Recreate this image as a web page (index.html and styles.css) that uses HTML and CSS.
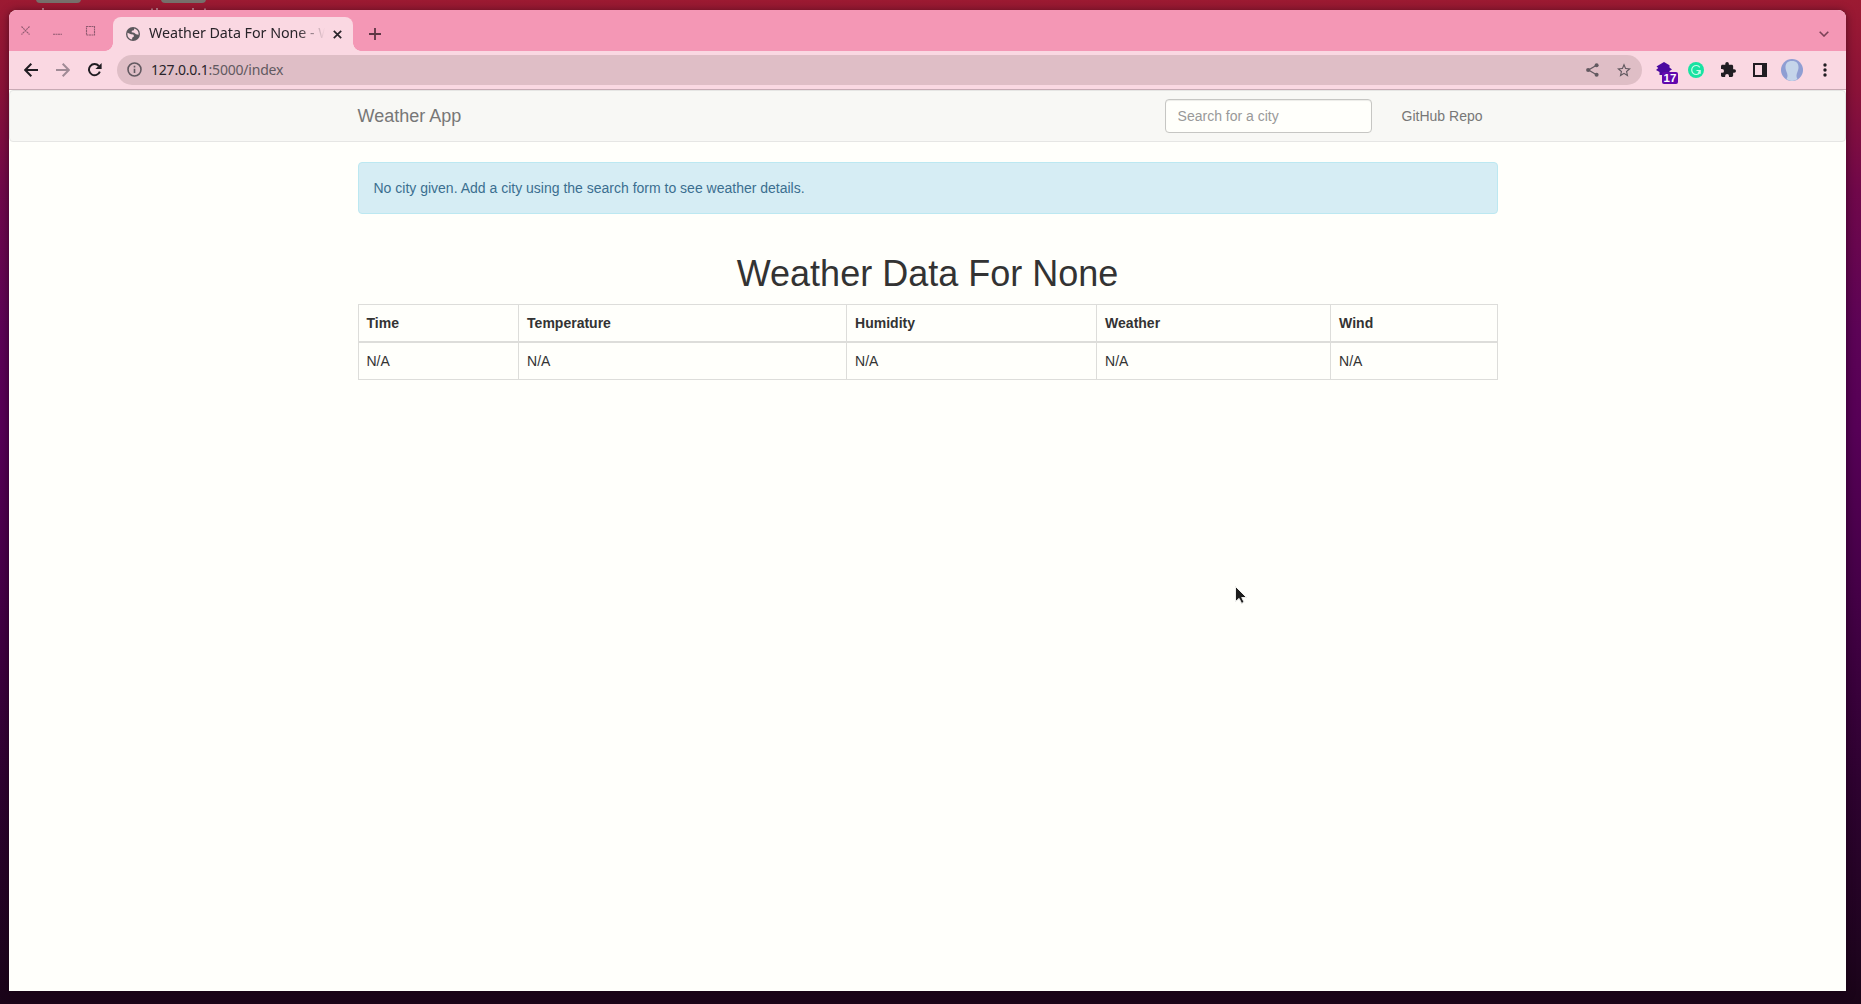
FILE: index.html
```
<!DOCTYPE html>
<html lang="en">
<head>
<meta charset="utf-8">
<title>Weather Data For None - Weather App</title>
<link rel="stylesheet" href="styles.css">
</head>
<body>
<div class="desktop">
  <div class="folder folder-one"></div>
  <div class="folder folder-two"></div>
  <svg class="labels" width="180" height="2" viewBox="0 0 180 2"><path d="M2 0v2M111 .5v1.500M116 0v2M152 0v2M164 .5v1.500" stroke="#d9b9bf" stroke-width="1.300"/></svg>
  <div class="window">
    <div class="tabstrip">
      <div class="controls">
        <svg width="9" height="9" viewBox="0 0 9 9"><path d="M.5.5l8 8M8.500.5l-8 8"/></svg>
        <svg width="9" height="9" viewBox="0 0 9 9"><path d="M0 8.200h9"/></svg>
        <svg width="11" height="10" viewBox="0 0 11 10"><path d="M1.500.5h8v8.500h-8z"/></svg>
      </div>
      <div class="tab">
        <svg class="globe" width="14" height="14" viewBox="0 0 14 14"><circle cx="7" cy="7" r="7" fill="#5c585d"/><path fill="#fad8e2" d="M1.500 5.800L5 7.200l2.300.2.800 1.900-1.900 1.500-.1 1.700C3.300 12.200 1.400 10 1.400 7.200zM8.300 1.600L7.900 3.300 5.900 3.800 5.600 5.300l2.500.4 1.900 1.600 2.600.4c.3-2.900-1.300-5.300-4.300-6.100z"/></svg>
        <span class="tab-title">Weather Data For None - W</span>
        <svg class="tab-close" width="9" height="9" viewBox="0 0 9 9"><path d="M.8.8l7.400 7.400M8.200.8L.8 8.200"/></svg>
      </div>
      <svg class="plus" width="12" height="12" viewBox="0 0 12 12"><path d="M6 0v12M0 6h12"/></svg>
      <svg class="chevron" width="10" height="6" viewBox="0 0 10 6"><path d="M.7.7L5 5 9.300.7"/></svg>
    </div>
    <div class="toolbar">
      <svg class="back" width="14" height="14" viewBox="0 0 14 14"><path d="M14 7H1.500M7.300.8L1.200 7l6.100 6.200"/></svg>
      <svg class="forward" width="14" height="14" viewBox="0 0 14 14"><path d="M0 7h12.500M6.700.8L12.800 7l-6.100 6.200"/></svg>
      <svg class="reload" width="14" height="14" viewBox="0 0 15 15"><path d="M12.700 9.200A6 6 0 1 1 11.600 3.200" fill="none" stroke="#201d22" stroke-width="2.100"/><path d="M14.600 0v6.500H8z" fill="#201d22"/></svg>
      <div class="address">
        <svg class="info" width="15" height="15" viewBox="0 0 15 15"><circle cx="7.500" cy="7.500" r="6.500"/><path d="M7.500 6.700v4.300M7.500 3.800v1.600"/></svg>
        <span class="url">127.0.0.1<span class="url-rest">:5000/index</span></span>
        <svg class="share" width="13" height="14" viewBox="0 0 13 14"><path d="M10.500 2.300L2.500 7l8 4.700" fill="none" stroke="#625960" stroke-width="1.300"/><g fill="#625960"><circle cx="10.600" cy="2.300" r="2"/><circle cx="2.200" cy="7" r="2.100"/><circle cx="10.600" cy="11.700" r="2"/></g></svg>
        <svg class="star" width="14" height="14" viewBox="2 2 20 19"><path fill="#625960" d="M22 9.240l-7.190-.62L12 2 9.190 8.630 2 9.240l5.460 4.730L5.820 21 12 17.270 18.180 21l-1.630-7.030L22 9.240zM12 15.400l-3.760 2.270 1-4.280-3.320-2.880 4.380-.38L12 6.100l1.710 4.040 4.380.38-3.320 2.880 1 4.280L12 15.400z"/></svg>
      </div>
      <div class="extension">
        <svg width="16" height="16" viewBox="0 0 16 16"><path fill="#4b0aa0" d="M8 0l5.500 3.200v2.300L16 7.500 13.500 9v4H3.500V10L0 8l2.300-2L.5 4.500 2.500 3.200z"/></svg>
        <span class="badge">17</span>
      </div>
      <svg class="grammar" width="16" height="16" viewBox="0 0 16 16"><circle cx="8" cy="8" r="8" fill="#18e3a2"/><path d="M11.800 5.300A4.500 4.500 0 1 0 11.800 10.700M8.500 8.500h3.700v3.200M12.200 8.700l-2 2" fill="none" stroke="#c9fbe9" stroke-width="1.200"/></svg>
      <svg class="puzzle" width="15" height="15" viewBox="2 1 21 21"><path fill="#201d22" d="M20.500 11H19V7c0-1.100-.9-2-2-2h-4V3.500a2.500 2.500 0 0 0-5 0V5H4c-1.100 0-2 .9-2 2v3.800h1.500a2.700 2.700 0 0 1 0 5.400H2V20c0 1.100.9 2 2 2h3.800v-1.500a2.700 2.700 0 0 1 5.400 0V22H17c1.100 0 2-.9 2-2v-4h1.500a2.500 2.500 0 0 0 0-5z"/></svg>
      <svg class="panel" width="14" height="14" viewBox="0 0 14 14"><path d="M0 0h14v14H0zM2 2v10h7V2z" fill="#201d22" fill-rule="evenodd"/></svg>
      <svg class="avatar" width="22" height="22" viewBox="0 0 22 22"><circle cx="11" cy="11" r="11" fill="#8f9ed3"/><path d="M11 2C6 2 4.300 5 4.500 9c.2 3 2 5 2 7.500 0 2-.6 3-1 3.600 3 2.400 8 2.400 11 0-.4-.6-1-1.600-1-3.600 0-2.500 1.800-4.500 2-7.500C17.700 5 16 2 11 2z" fill="#c5d5ea"/></svg>
      <svg class="menu" width="4" height="14" viewBox="0 0 4 14"><g fill="#201d22"><circle cx="2" cy="2" r="1.700"/><circle cx="2" cy="7" r="1.700"/><circle cx="2" cy="12" r="1.700"/></g></svg>
    </div>
    <div class="page">
      <nav class="navbar">
        <div class="container nav-row">
          <a class="brand">Weather App</a>
          <input class="search" type="text" placeholder="Search for a city">
          <a class="repo">GitHub Repo</a>
        </div>
      </nav>
      <main class="container">
        <div class="alert">No city given. Add a city using the search form to see weather details.</div>
        <h1>Weather Data For None</h1>
        <table>
          <colgroup><col class="c-time"><col class="c-temp"><col class="c-hum"><col class="c-weather"><col class="c-wind"></colgroup>
          <thead><tr><th>Time</th><th>Temperature</th><th>Humidity</th><th>Weather</th><th>Wind</th></tr></thead>
          <tbody><tr><td>N/A</td><td>N/A</td><td>N/A</td><td>N/A</td><td>N/A</td></tr></tbody>
        </table>
      </main>
    </div>
  </div>
  <svg class="cursor" width="14" height="20" viewBox="0 0 14 20"><path d="M1.500 1.500v15l3.600-3.100 2.500 5 2.500-1.200-2.400-4.700h4.800z" fill="#1c1c1c" stroke="#efefec" stroke-width="1"/></svg>
</div>
</body>
</html>
```
FILE: styles.css
```
* { box-sizing: border-box; }
body { margin: 0; font-family: "Liberation Sans", Arial, sans-serif; font-size: 14px; line-height: 20px; color: #333; }
svg { display: block; flex: none; }
.desktop {
  position: relative;
  height: 1004px;
  padding: 10px 15px 13px 9px;
  overflow: hidden;
  background: linear-gradient(#9c1a32 0, #8a1238 90px, #70084a 190px, #5c0356 330px, #560056 430px, #460048 580px, #2e0230 780px, #1e041e 960px, #1a0418 1004px);
}
.folder { position: absolute; top: -10px; width: 45px; height: 13px; border-radius: 4px; background: #77706c; }
.folder-one { left: 36px; }
.folder-two { left: 161px; }
.labels { position: absolute; left: 41px; top: 8px; }
.window {
  position: relative;
  display: flex;
  flex-direction: column;
  height: 981px;
  border-radius: 8px 8px 0 0;
  background: #fffffb;
  box-shadow: 0 1px 8px rgba(20, 0, 15, .55);
}
.tabstrip { display: flex; height: 41px; padding-right: 17px; border-radius: 8px 8px 0 0; background: #f497b5; }
.controls { display: flex; width: 104px; padding: 16px 0 0 12px; gap: 23px; }
.controls path { fill: none; stroke: #8f5a70; stroke-width: 1.100; stroke-dasharray: 2 .5; }
.tab { position: relative; display: flex; align-items: center; width: 240px; height: 34px; margin-top: 7px; padding: 0 11px 0 13px; border-radius: 8px 8px 0 0; background: #fad8e2; }
.tab::before, .tab::after { content: ""; position: absolute; bottom: 0; width: 8px; height: 8px; }
.tab::before { left: -8px; background: radial-gradient(circle at 0 0, transparent 7.500px, #fad8e2 8px); }
.tab::after { right: -8px; background: radial-gradient(circle at 100% 0, transparent 7.500px, #fad8e2 8px); }
.tab-title { width: 176px; margin: -2px 8px 0 9px; white-space: nowrap; font: 14.300px/20px "Noto Sans", sans-serif; letter-spacing: -.04px; color: #29242a; -webkit-mask-image: linear-gradient(90deg, #000 148px, transparent 176px); mask-image: linear-gradient(90deg, #000 148px, transparent 176px); }
.tab-close path { stroke: #29242a; stroke-width: 1.700; }
.plus { margin: 18px 0 0 16px; }
.plus path { stroke: #5d3644; stroke-width: 1.800; }
.chevron { margin: 21px 0 0 auto; }
.chevron path { fill: none; stroke: #7a4156; stroke-width: 1.600; }
.toolbar { display: flex; align-items: center; height: 39px; padding: 0 19px 1px 15px; background: #fad8e2; border-bottom: 1px solid #c8aab4; }
.back path, .forward path { fill: none; stroke: #201d22; stroke-width: 2; }
.forward { margin-left: 18px; }
.forward path { stroke: #a08b96; }
.reload { margin-left: 18px; }
.address { display: flex; align-items: center; flex: 1; height: 30px; margin-left: 15px; padding: 0 11px; border-radius: 15px; background: #dfbec6; }
.info { margin-left: -1px; }
.info path, .info circle { fill: none; stroke: #625960; stroke-width: 1.600; }
.url { margin-left: 9px; font: 14px/20px "Noto Sans", sans-serif; letter-spacing: -.2px; color: #29242a; }
.url-rest { color: #625960; }
.share { margin-left: auto; }
.star { margin-left: 18px; }
.extension { position: relative; width: 16px; height: 16px; margin-left: 14px; }
.badge { position: absolute; left: 6px; top: 10px; width: 16px; height: 12px; border-radius: 2px; background: #6208ad; color: #fff; font: bold 11.500px/12px "Liberation Sans", sans-serif; text-align: center; }
.grammar { margin-left: 16px; }
.puzzle { margin-left: 17px; }
.panel { margin-left: 17px; }
.avatar { margin-left: 14px; }
.menu { margin-left: 20px; }
.container { width: 1170px; margin: 0 auto; padding: 0 15px; }
.navbar { height: 52px; margin-bottom: 20px; border: 1px solid #e6e6e4; border-radius: 4px; background: #f8f8f5; }
.nav-row { display: flex; align-items: center; height: 50px; }
.brand { font-size: 18px; color: #777; }
.search { width: 207px; height: 34px; margin-left: auto; padding: 6px 12px; border: 1px solid #c6c6c3; border-radius: 4px; background: #fffffb; box-shadow: inset 0 1px 1px rgba(0, 0, 0, .075); font: 14px/20px "Liberation Sans", Arial, sans-serif; }
.search::placeholder { color: #999; opacity: 1; }
.repo { padding: 0 15px; margin-left: 15px; color: #777; }
.alert { height: 52px; margin-bottom: 20px; padding: 15px; border: 1px solid #bce8f1; border-radius: 4px; background: #d6edf4; color: #3b6f90; }
h1 { margin: 40px 0 10px; font-size: 36px; font-weight: 500; line-height: 40px; text-align: center; }
table { width: 1139.500px; table-layout: fixed; border-collapse: collapse; border: 1px solid #ddddda; }
th, td { padding: 8px; border: 1px solid #ddddda; text-align: left; }
th + th, td + td { padding-left: 8.600px; }
th { border-bottom-width: 2px; }
.c-time { width: 160px; }
.c-temp { width: 328px; }
.c-hum { width: 250px; }
.c-weather { width: 234px; }
.c-wind { width: 167px; }
.cursor { position: absolute; left: 1234px; top: 585px; }
```
